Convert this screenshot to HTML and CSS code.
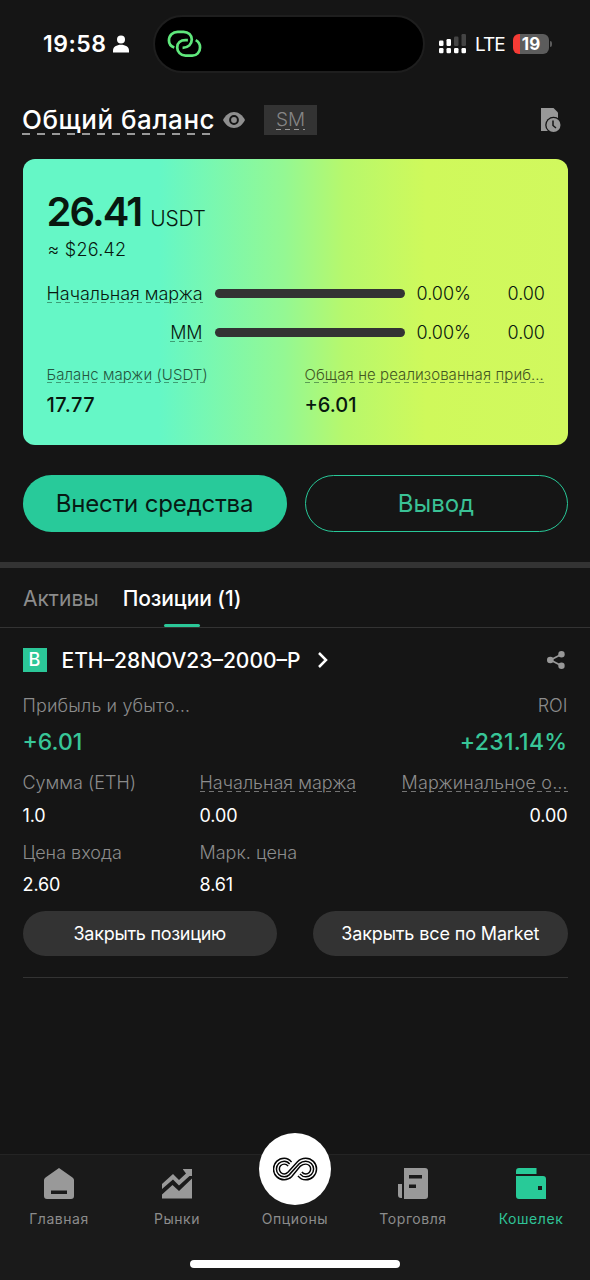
FILE: index.html
```html
<!DOCTYPE html>
<html lang="ru">
<head>
<meta charset="utf-8">
<title>Кошелек</title>
<link rel="stylesheet" href="styles.css">
</head>
<body>
<div class="screen">
  <header class="status">
    <div class="clock"><span class="time">19:58</span>
      <svg class="person" viewBox="0 0 16 18"><circle cx="8" cy="4.500" r="4"/><path d="M0 17.500v-2C0 12 3.500 9.800 8 9.800s8 2.200 8 5.700v2z"/></svg>
    </div>
    <div class="island">
      <svg class="link" viewBox="0 0 36 28" fill="none" stroke="#5fe87c" stroke-width="2.800"><path d="M7.500 18.200C4 17 2 14 2 11c0-5.500 4-9 9-9h6c5 0 8.500 3.500 8.500 8s-3.500 8.500-9.500 8.500"/><path d="M21.500 10.500h-2.500c-5 0-8.500 3-8.500 7.500s3.500 8.500 8.500 8.500h7c4.500 0 8-3.500 8-8.500 0-3-1.500-6-4.500-7.500"/></svg>
    </div>
    <div class="signals">
      <svg class="bars" viewBox="0 0 28 20"><g fill="#fff"><rect x="0" y="6.500" width="4.500" height="5.500" rx="1.200"/><rect x="7.500" y="5" width="4.500" height="7" rx="1.200"/><rect x="0" y="14" width="4.500" height="5.300" rx="1.200"/><rect x="7.500" y="14" width="4.500" height="5.300" rx="1.200"/><rect x="15" y="14" width="4.500" height="5.300" rx="1.200"/><rect x="22.500" y="14" width="4.500" height="5.300" rx="1.200"/></g><g fill="#444"><rect x="15" y="2.500" width="4.500" height="9.500" rx="1.200"/><rect x="22.500" y="0" width="4.500" height="12" rx="1.200"/></g></svg>
      <span class="lte">LTE</span>
      <span class="battery">19</span><span class="cap"></span>
    </div>
  </header>

  <section class="heading">
    <h1 class="title">Общий баланс</h1>
    <svg class="eye" viewBox="0 0 22 16"><path d="M0 8C2.500 3 6.500 0 11 0s8.500 3 11 8c-2.500 5-6.500 8-11 8S2.500 13 0 8z" fill="#8f8f8f"/><circle cx="11" cy="8" r="3.900" fill="none" stroke="#151515" stroke-width="2"/></svg>
    <span class="mode"><span class="dashed">SM</span></span>
    <svg class="history" viewBox="0 0 21 25"><path d="M1 0h12.500L18 4.500V23H1z" fill="#989898"/><circle cx="13.500" cy="17" r="8.300" fill="#151515"/><circle cx="13.500" cy="17" r="7" fill="#989898"/><path d="M13 12.500v5l3 2.500" fill="none" stroke="#151515" stroke-width="1.500"/></svg>
  </section>

  <section class="card">
    <div class="total"><b class="amount">26.41</b><span class="unit">USDT</span></div>
    <div class="approx">≈ $26.42</div>
    <div class="meter m1"><span class="meter-name"><span class="dashed">Начальная маржа</span></span><i class="track"></i><span class="pct">0.00%</span><span class="val">0.00</span></div>
    <div class="meter m2"><span class="meter-name"><span class="dashed">MM</span></span><i class="track"></i><span class="pct">0.00%</span><span class="val">0.00</span></div>
    <div class="summary">
      <div><span class="small s1 dashed">Баланс маржи (USDT)</span><b class="figure f1">17.77</b></div>
      <div><span class="small s2 dashed">Общая не реализованная приб…</span><b class="figure">+6.01</b></div>
    </div>
  </section>

  <div class="actions"><button class="deposit">Внести средства</button><button class="withdraw">Вывод</button></div>

  <nav class="tabs"><span class="tab t1">Активы</span><span class="tab active"><span class="t2">Позиции (1)</span></span></nav>

  <section class="position">
    <div class="contract"><span class="badge">B</span><span class="symbol">ETH–28NOV23–2000–P</span>
      <svg class="chevron" viewBox="0 0 10 16" fill="none" stroke="#fff" stroke-width="2.500"><path d="M1 1l7 7-7 7"/></svg>
      <svg class="share" viewBox="0 0 18 18" fill="#989898"><path d="M15 3L3.500 9 15 15" fill="none" stroke="#989898" stroke-width="1.700"/><circle cx="14.500" cy="3.200" r="3.200"/><circle cx="3.300" cy="9" r="3.300"/><circle cx="14.500" cy="14.800" r="3.200"/></svg>
    </div>
    <div class="split label"><span class="l1">Прибыль и убыто…</span><span class="l2">ROI</span></div>
    <div class="split gain"><span class="g1">+6.01</span><span class="g2">+231.14%</span></div>
    <div class="row label r1"><span class="l3">Сумма (ETH)</span><span><span class="l4 dashed">Начальная маржа</span></span><span><span class="l5 dashed">Маржинальное о…</span></span></div>
    <div class="row value r2"><span>1.0</span><span>0.00</span><span>0.00</span></div>
    <div class="row label r3"><span class="l6">Цена входа</span><span class="l7">Марк. цена</span></div>
    <div class="row value r4"><span>2.60</span><span>8.61</span></div>
    <div class="closers"><button class="close c1">Закрыть позицию</button><button class="close c2">Закрыть все по Market</button></div>
  </section>

  <footer class="bottom">
    <div class="items">
      <div class="item"><svg viewBox="0 0 32 32"><path d="M16 0l13.500 9.500Q31 10.500 31 12v16q0 3-3 3H4q-3 0-3-3V12q0-1.500 1.500-2.500z"/><path d="M8 22.500h16v3.500H8z" fill="#1a1a1a"/></svg><span>Главная</span></div>
      <div class="item"><svg viewBox="0 0 32 32"><path d="M1 30.500V26.500L11.500 17l6.500 6L31 10.500V30.500zM1 21v-5L12 6l6 6 7-6.500-3-4V1h9v7h-2.500L18 17.500l-6-6z"/></svg><span>Рынки</span></div>
      <div class="item center"><div class="disc"><svg class="infinity" viewBox="0 0 46 24" fill="none" stroke="#050505" stroke-width="1.500"><path d="M19 5C17 2.500 14.500 1 11.500 1a11 11 0 0 0 0 22c3 0 5.500-1 7.500-3L28 9q2.500-2 5.500-2a5 5 0 0 1 0 10q-2.500 0-4-2"/><path d="M17 7Q15 4 11.500 4a8 8 0 0 0 0 16q3 0 5-2L27 6.500Q29.500 4 33.500 4a8 8 0 0 1 0 16q-3.500 0-6-3"/><path d="M15.500 9q-1.500-2-4-2a5 5 0 0 0 0 10q2 0 4-2L25 4.500Q28.500 1 33.500 1a11 11 0 0 1 0 22q-5 0-8-4"/></svg></div><span>Опционы</span></div>
      <div class="item"><svg viewBox="0 0 32 32"><path d="M7 0h21q3 0 3 3v25q0 3-3 3H7zM1 16h4v14H4q-3 0-3-3z"/><path d="M12 7h13v3.500H12zM12 16.500h7V20h-7z" fill="#1a1a1a"/></svg><span>Торговля</span></div>
      <div class="item current"><svg viewBox="0 0 32 32"><path d="M1 3q0-3 3-3h17.500v6H1zM1 8h27q3 0 3 3v20H4q-3 0-3-3z"/><path d="M23 18h4v4h-4z" fill="#1a1a1a"/></svg><span>Кошелек</span></div>
    </div>
    <div class="indicator"></div>
  </footer>
</div>
</body>
</html>
```
FILE: styles.css
```css
* { box-sizing: border-box; }
body { margin: 0; background: #151515; }
.screen { width: 590px; height: 1280px; display: flex; flex-direction: column; background: #151515; color: #fff; font-family: Inter, "Noto Sans", sans-serif; font-weight: 300; overflow: hidden; white-space: nowrap; }
button { border: 0; margin: 0; padding: 0; font: inherit; background: none; }
svg { display: block; flex: none; }

.status { height: 88px; display: grid; grid-template-columns: 153px 272px 1fr; align-items: center; }
.clock { display: flex; align-items: center; gap: 7px; padding-left: 43px; }
.time { font-size: 23px; font-weight: 600; letter-spacing: .5px; line-height: 30px; }
.person { width: 16px; height: 18px; fill: #fff; }
.island { height: 58px; border-radius: 29px; background: #000; border: 2px solid #1e1e1e; padding: 12px 0 0 12px; }
.link { width: 35px; height: 29px; }
.signals { display: flex; align-items: center; padding-left: 14px; }
.bars { width: 28px; height: 20px; }
.lte { font-size: 19px; font-weight: 400; margin-left: 8px; width: 38px; letter-spacing: -1px; }
.battery { width: 36px; height: 20px; border-radius: 6px; background: linear-gradient(90deg, #f53b35 7px, #5c5c5c 7px); font-size: 17px; line-height: 20px; font-weight: 700; text-align: center; }
.cap { width: 2px; height: 6px; margin-left: 1px; border-radius: 0 3px 3px 0; background: #5c5c5c; }

.heading { height: 71px; padding: 0 22px 7px 22px; display: flex; align-items: center; }
.dashed { background: repeating-linear-gradient(90deg, var(--dash, #747474) 0 5px, transparent 5px 9px) left bottom / 100% 1px no-repeat; }
.title { margin: 0; font-size: 26px; font-weight: 500; letter-spacing: .52px; line-height: 30px; height: 30px; background: repeating-linear-gradient(90deg, #999 0 8px, transparent 8px 15px) left bottom / 100% 2px no-repeat; }
.eye { width: 22px; height: 16px; margin-left: 8px; }
.mode { width: 53px; height: 30px; margin-left: 19px; background: #333; color: #858585; font-size: 19px; display: flex; justify-content: center; align-items: center; }
.mode .dashed { line-height: 20px; --dash: #999; }
.history { width: 21px; height: 25px; margin-left: auto; margin-right: 7px; }

.card { height: 286px; margin: 0 22.500px; padding: 32px 22.500px 0 24px; border-radius: 12px; color: #08170f; background: linear-gradient(90deg, #65f7c6 0%, #65f7c6 25%, #94f893 48%, #b7f86c 59%, #cff95b 74%, #d1f85e 100%); }
.card .dashed { --dash: rgba(20, 70, 40, .5); }
.total { height: 42px; display: flex; align-items: baseline; gap: 9px; line-height: 42px; }
.amount { font-size: 40px; font-weight: 600; letter-spacing: -1.900px; }
.unit { font-size: 21px; letter-spacing: -.3px; }
.approx { margin: 5px 0 0 1px; font-size: 18px; line-height: 24px; letter-spacing: .25px; }
.meter { display: grid; grid-template-columns: 156px 190px 66px 1fr; column-gap: 12px; align-items: center; height: 24px; font-size: 18px; }
.m1 { margin-top: 19px; }
.m2 { margin-top: 15px; }
.meter-name { text-align: right; letter-spacing: -.05px; }
.meter-name .dashed { display: inline-block; line-height: 18px; }
.track { height: 9px; border-radius: 5px; background: #333; }
.val { text-align: right; }
.summary { display: grid; grid-template-columns: 258px 1fr; margin-top: 22px; }
.summary > div { display: flex; flex-direction: column; align-items: flex-start; }
.small { font-size: 15px; line-height: 18px; height: 17px; color: #24563d; letter-spacing: .08px; }
.s2 { color: #425622; }
.figure { font-size: 20px; font-weight: 500; line-height: 26px; margin-top: 9px; }
.f1 { letter-spacing: .5px; }

.actions { display: grid; grid-template-columns: 264px 263px; gap: 18px; padding: 30px 0 0 22.500px; height: 117px; }
.actions button { height: 57px; border-radius: 29px; font-size: 24px; font-weight: 400; }
.actions .deposit { background: #28ca9a; color: #071a14; letter-spacing: -.15px; }
.actions .withdraw { border: 1.500px solid #28c898; color: #3ac195; }

.tabs { height: 66px; border-top: 6px solid #333; border-bottom: 1px solid #333; display: flex; padding-left: 23px; gap: 24px; font-size: 21px; line-height: 61px; }
.tab { color: #8c8c8c; font-weight: 400; }
.tab.active { color: #fff; font-weight: 500; position: relative; letter-spacing: -.1px; }
.tab.active::after { content: ""; position: absolute; left: 41px; bottom: 0; width: 36px; height: 3px; border-radius: 2px; background: #2bc798; }

.position { margin: 0 22.500px; height: 350px; border-bottom: 1px solid #333; }
.contract { height: 64px; display: flex; align-items: center; }
.badge { width: 24px; height: 24px; background: #2bc798; font-size: 18px; font-weight: 500; line-height: 24px; text-align: center; }
.symbol { font-size: 21px; font-weight: 500; margin-left: 15px; }
.chevron { width: 10px; height: 16px; margin-left: 18px; }
.share { width: 18px; height: 18px; margin-left: auto; margin-right: 3px; }
.split { display: flex; justify-content: space-between; }
.label { color: #8c8c8c; font-size: 18px; line-height: 22px; }
.split.label { margin-top: 3px; }
.l1 { letter-spacing: .15px; }
.gain { color: #38c698; font-size: 23px; font-weight: 500; line-height: 30px; margin-top: 10px; }
.g2 { letter-spacing: .3px; }
.row { display: grid; grid-template-columns: 177px 159px 1fr; }
.row > :nth-child(3) { text-align: right; }
.row .dashed { display: inline-block; height: 20px; line-height: 22px; }
.l5 { letter-spacing: .12px; }
.value { font-size: 18px; font-weight: 400; line-height: 24px; letter-spacing: -.1px; }
.r1 { height: 22px; margin-top: 15px; }
.r2 { margin-top: 10px; }
.r3 { margin-top: 14px; }
.r4 { margin-top: 9px; }
.closers { margin-top: 14px; display: flex; justify-content: space-between; }
.close { width: 254.500px; height: 45px; border-radius: 23px; background: #333; color: #fff; font-size: 18px; font-weight: 400; }
.c1 { letter-spacing: -.27px; }
.c2 { letter-spacing: -.13px; }

.bottom { margin-top: auto; height: 126px; border-top: 1px solid #242424; background: #1a1a1a; }
.items { height: 105px; padding: 13px 0 0; display: grid; grid-template-columns: repeat(5, 118px); }
.item { display: flex; flex-direction: column; align-items: center; color: #8c8c8c; fill: #999; font-size: 14px; font-weight: 400; line-height: 20px; letter-spacing: .55px; }
.item > svg { width: 32px; height: 32px; margin-bottom: 9px; }
.disc { width: 72px; height: 72px; margin: -35px 0 4px; border-radius: 50%; background: #fff; display: flex; justify-content: center; align-items: center; }
.infinity { width: 45px; height: 24px; }
.current { color: #2fc397; fill: #28ca98; }
.indicator { width: 210px; height: 8px; margin: 0 auto; border-radius: 4px; background: #fff; }
```
